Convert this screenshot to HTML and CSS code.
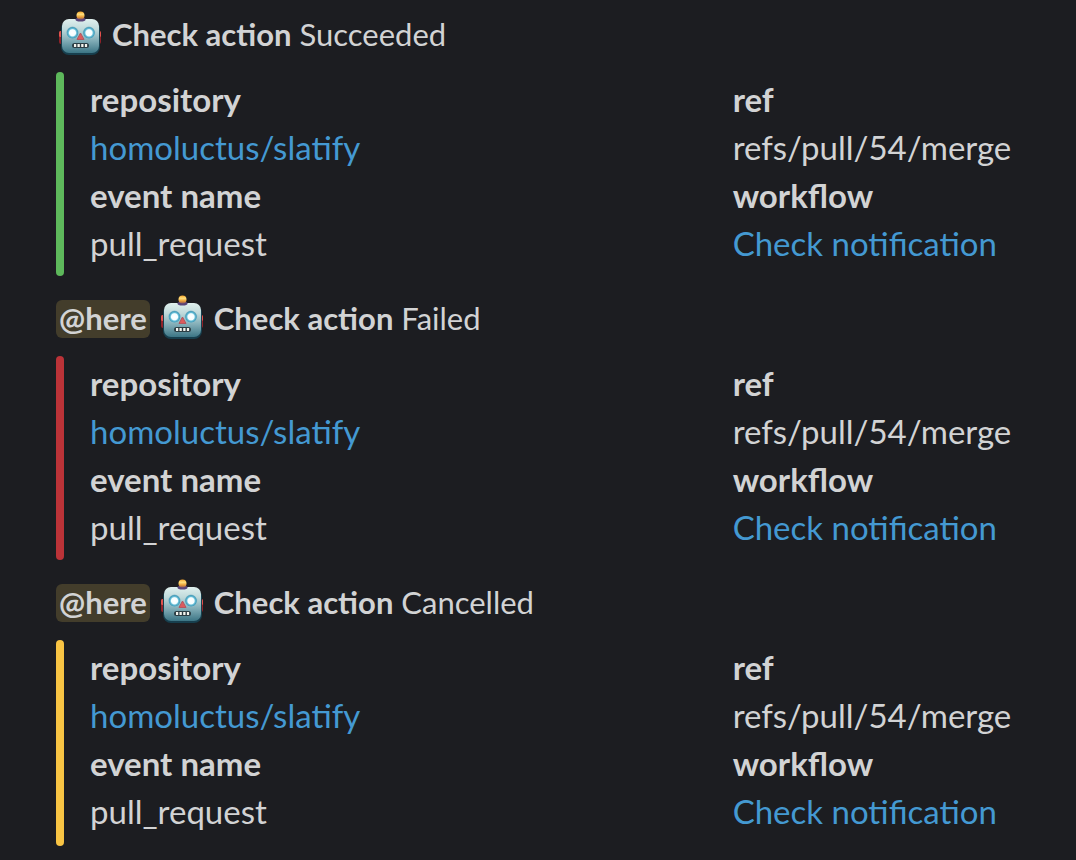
FILE: index.html
```html
<!DOCTYPE html>
<html lang="en">
<head>
<meta charset="utf-8">
<title>Check action notifications</title>
<link rel="stylesheet" href="styles.css">
</head>
<body>
<svg class="defs" aria-hidden="true">
  <defs>
    <linearGradient id="face" x1="0" y1="0" x2="0" y2="1">
      <stop offset="0" stop-color="#e0f0ee"/><stop offset=".3" stop-color="#c0dadb"/>
      <stop offset=".65" stop-color="#7fabb5"/><stop offset="1" stop-color="#3c7585"/>
    </linearGradient>
    <linearGradient id="knob" x1="0" y1="0" x2="0" y2="1">
      <stop offset="0" stop-color="#f7a52a"/><stop offset=".35" stop-color="#ffdf7c"/><stop offset=".7" stop-color="#e99d35"/><stop offset="1" stop-color="#8a5560"/>
    </linearGradient>
    <radialGradient id="eye">
      <stop offset="0" stop-color="#fff"/><stop offset=".5" stop-color="#f4feff"/>
      <stop offset=".68" stop-color="#62bcd6"/><stop offset=".85" stop-color="#4a9fbb"/><stop offset="1" stop-color="#8dbcc8"/>
    </radialGradient>
    <symbol id="robot" viewBox="0 0 44 46">
      <rect x="1" y="20" width="5" height="13" rx="2" fill="#8f2229"/>
      <rect x="38" y="20" width="5" height="13" rx="2" fill="#8f2229"/>
      <rect x="1" y="20" width="4" height="6" rx="1.500" fill="#e0524d"/>
      <rect x="39" y="20" width="4" height="6" rx="1.500" fill="#e0524d"/>
      <rect x="3" y="10" width="39" height="34" rx="8" fill="#173f4e"/>
      <rect x="4" y="8" width="37" height="34" rx="7" fill="url(#face)"/>
      <path d="M17.500 8.500q0-2 5-2t5 2q0 2-5 2t-5-2z" fill="#594579"/>
      <circle cx="22.500" cy="4.500" r="4" fill="url(#knob)"/>
      <circle cx="14.500" cy="21.800" r="6.200" fill="url(#eye)"/>
      <circle cx="31" cy="21.800" r="6.200" fill="url(#eye)"/>
      <path d="M22.500 22l3.500 6.500h-7z" fill="#dd5a5c" stroke="#b2575f" stroke-width="1" stroke-linejoin="round"/>
      <rect x="14" y="32" width="17" height="5" rx="2.500" fill="#2c3e44"/>
      <path d="M16 33h2.200v3H16zM19.500 33h2.300v3h-2.300zM23.200 33h2.300v3h-2.300zM26.900 33h2.200v3h-2.200z" fill="#f4f4ee"/>
    </symbol>
  </defs>
</svg>
<main class="feed">
  <article class="message">
    <h2 class="title"><svg class="emoji" role="img" aria-label="robot"><use href="#robot"/></svg><span class="status"><b>Check action</b> Succeeded</span></h2>
    <div class="attachment attachment-success">
      <dl class="fields">
        <div class="field"><dt>repository</dt><dd><a href="#">homoluctus/slatify</a></dd></div>
        <div class="field"><dt>ref</dt><dd>refs/pull/54/merge</dd></div>
        <div class="field"><dt>event name</dt><dd>pull_request</dd></div>
        <div class="field"><dt>workflow</dt><dd><a href="#">Check notification</a></dd></div>
      </dl>
    </div>
  </article>
  <article class="message">
    <h2 class="title"><span class="mention">@here</span><svg class="emoji" role="img" aria-label="robot"><use href="#robot"/></svg><span class="status"><b>Check action</b> Failed</span></h2>
    <div class="attachment attachment-failure">
      <dl class="fields">
        <div class="field"><dt>repository</dt><dd><a href="#">homoluctus/slatify</a></dd></div>
        <div class="field"><dt>ref</dt><dd>refs/pull/54/merge</dd></div>
        <div class="field"><dt>event name</dt><dd>pull_request</dd></div>
        <div class="field"><dt>workflow</dt><dd><a href="#">Check notification</a></dd></div>
      </dl>
    </div>
  </article>
  <article class="message">
    <h2 class="title"><span class="mention">@here</span><svg class="emoji" role="img" aria-label="robot"><use href="#robot"/></svg><span class="status"><b>Check action</b> Cancelled</span></h2>
    <div class="attachment attachment-cancelled">
      <dl class="fields">
        <div class="field"><dt>repository</dt><dd><a href="#">homoluctus/slatify</a></dd></div>
        <div class="field"><dt>ref</dt><dd>refs/pull/54/merge</dd></div>
        <div class="field"><dt>event name</dt><dd>pull_request</dd></div>
        <div class="field"><dt>workflow</dt><dd><a href="#">Check notification</a></dd></div>
      </dl>
    </div>
  </article>
</main>
</body>
</html>
```
FILE: styles.css
```css
* { box-sizing: border-box; }
body {
  margin: 0;
  background: #1c1d21;
  color: #d2d3d4;
  font-family: Lato, "Liberation Sans", sans-serif;
  font-size: 33px;
  line-height: 48px;
}
.defs { position: absolute; width: 0; height: 0; }
.feed { padding: 6px 22px 0 56px; }
.title {
  display: flex;
  align-items: center;
  gap: 10px;
  height: 58px;
  margin: 0 0 8px;
  font-size: 31px;
  font-weight: 400;
}
.emoji { flex: none; width: 44px; height: 46px; margin-bottom: 2px; }
.title .emoji:first-child { margin-left: 2px; }
.status { padding-bottom: 2px; }
.mention {
  padding: 0 3px 2px;
  border-radius: 6px;
  background: #433d2b;
  font-weight: 700;
  line-height: 36px;
}
.attachment {
  display: flex;
  gap: 26px;
  margin-bottom: 14px;
}
.attachment::before {
  content: "";
  flex: none;
  width: 8px;
  border-radius: 4px;
  background: var(--status);
}
.attachment-success { --status: #5db85b; }
.attachment-failure { --status: #bb3338; }
.attachment-cancelled { --status: #f8c444; }
.fields {
  flex: 1;
  display: grid;
  grid-template-columns: 2fr 1fr;
  margin: 0;
  padding: 3px 0 9px;
}
.message:last-child .fields { padding-bottom: 11px; }
.field { min-width: 0; }
dt { font-weight: 700; }
dd { margin: 0; white-space: nowrap; }
a { color: #4499d2; text-decoration: none; }
```
